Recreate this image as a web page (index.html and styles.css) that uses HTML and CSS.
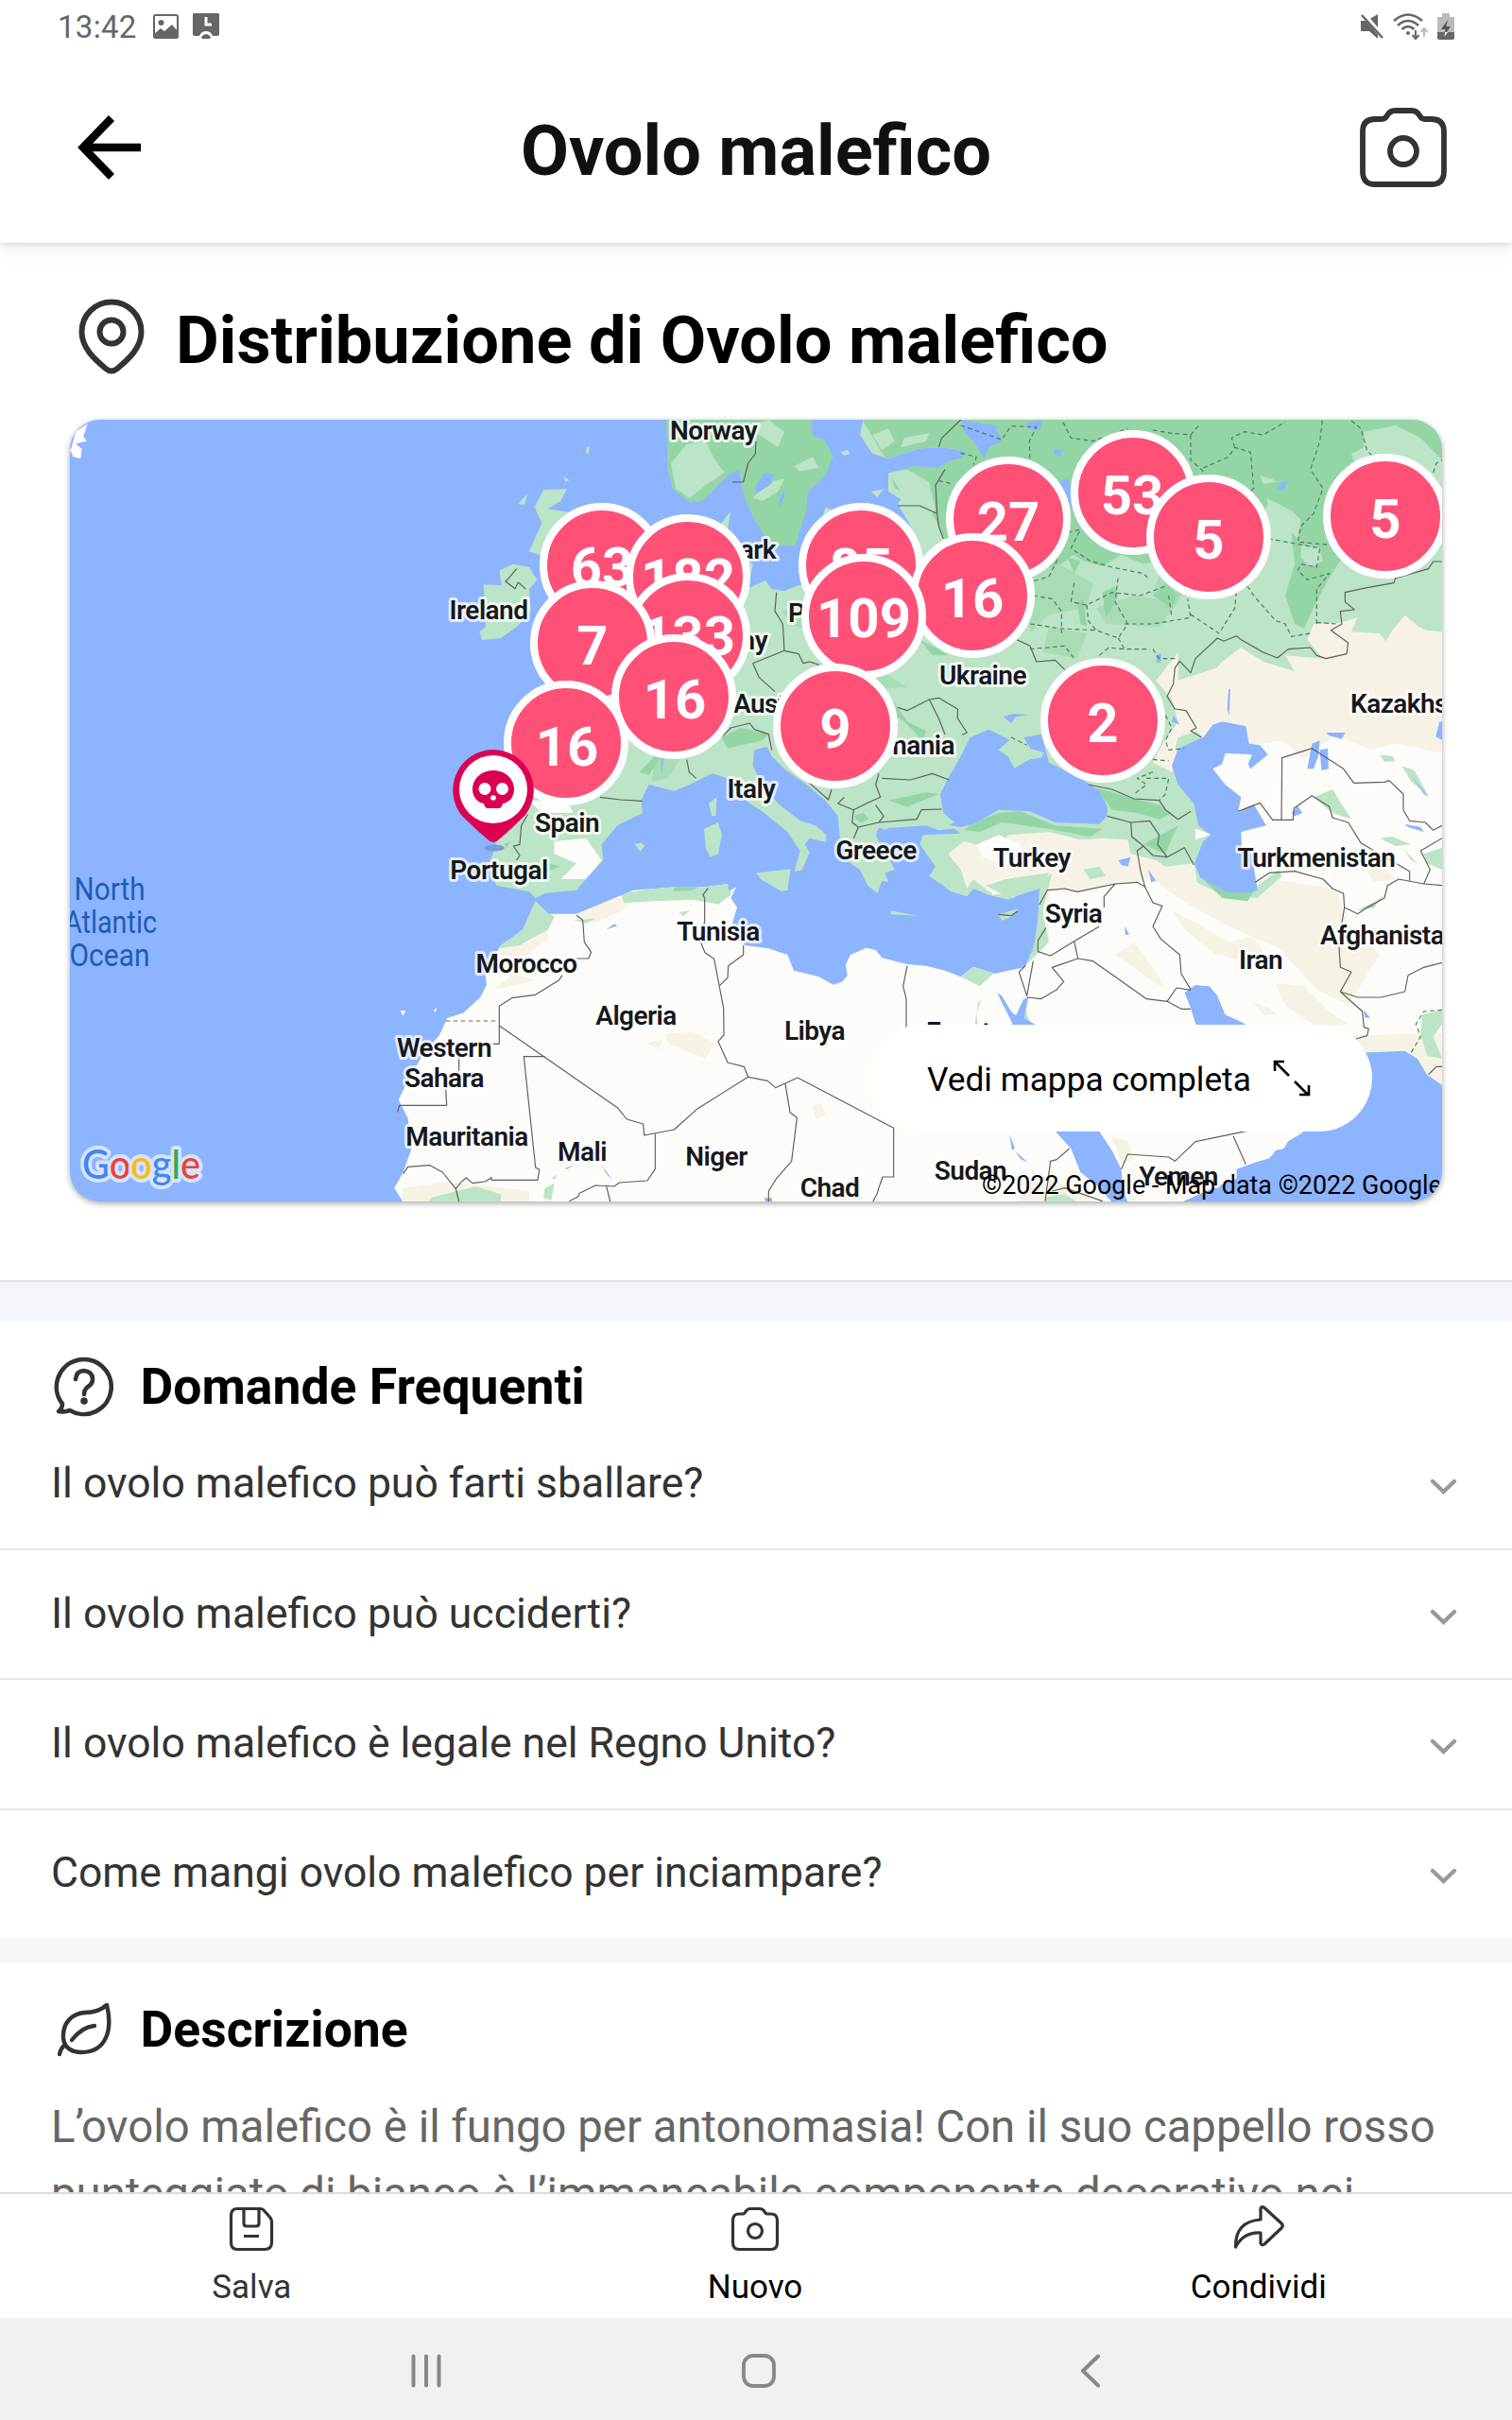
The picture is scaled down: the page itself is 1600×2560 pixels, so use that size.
FILE: index.html
```
<!DOCTYPE html>
<html lang="it">
<head>
  <meta charset="UTF-8">
  <meta name="viewport" content="width=device-width, initial-scale=1.0">
  <title>Ovolo malefico</title>
  <link rel="stylesheet" href="styles.css">
</head>
<body>
  <!-- status bar -->
  <div class="status-bar">
    <div class="status-left">
      <span class="clock">13:42</span>
      <svg class="status-photo" width="27" height="26" viewBox="0 0 27 26">
        <rect x="1" y="1" width="25" height="24" rx="1.5" fill="none" stroke="#666" stroke-width="2"/>
        <circle cx="8.500" cy="9" r="3" fill="#666"/>
        <path d="M1 21 L8 15 L12 18 L20 11 L26 18 V25 H1 Z" fill="#666"/>
      </svg>
      <svg class="status-app" width="30" height="28" viewBox="0 0 30 28">
        <path d="M2 0 H28 Q29 0 29 2 V22 Q29 24 26 24 L22 24 Q20 19 15 19 Q10 19 8 24 L4 24 Q1 24 1 22 V2 Q1 0 2 0 Z" fill="#666"/>
        <path d="M15 4 V12 H21" fill="none" stroke="#fff" stroke-width="3"/>
        <path d="M10 25 Q15 19 20 25 L19 27 H11 Z" fill="#666"/>
      </svg>
    </div>
    <div class="status-right">
      <svg width="26" height="28" viewBox="0 0 26 28">
        <path d="M1 8 H7 L19 1 V27 L10 19 H1 Z" fill="#666"/>
        <path d="M3 0 L26 27" stroke="#fff" stroke-width="5"/>
        <path d="M2 2 L24 26" stroke="#666" stroke-width="2.500"/>
      </svg>
      <svg width="38" height="28" viewBox="0 0 38 28">
        <g fill="none" stroke="#666" stroke-width="2.600">
          <path d="M1 8 Q16 -5 31 8"/>
          <path d="M5 13 Q16 3 27 13"/>
          <path d="M9.500 17 Q16 11 22.500 17"/>
          <path d="M24 18 V26 M20.500 23 L24 27 L27.500 23" stroke-width="2"/>
          <path d="M33 25 V17 M29.500 20 L33 16 L36.500 20" stroke="#bbb" stroke-width="2"/>
        </g>
        <circle cx="16" cy="21" r="2" fill="#666"/>
      </svg>
      <svg width="18" height="28" viewBox="0 0 18 28">
        <path d="M5 0 H13 V4 H18 V27 H0 V4 H5 Z" fill="#bbb"/>
        <path d="M0 20 H18 V26 Q18 28 16 28 H2 Q0 28 0 26 Z" fill="#666"/>
        <path d="M11 7 L4 17 H8.500 L7 24 L14 14 H9.500 Z" fill="#555"/>
        <path d="M8 20 H11 L7.500 25 Z" fill="#fff"/>
      </svg>
    </div>
  </div>

  <!-- header -->
  <header class="header">
    <svg class="back-arrow" width="68" height="68" viewBox="0 0 68 68" fill="none" stroke="#000" stroke-width="8.500">
      <path d="M67 34 H7 M36 3 L6 34 L36 65"/>
    </svg>
    <h1>Ovolo malefico</h1>
    <svg class="camera" width="92" height="84" viewBox="0 0 92 84" fill="none" stroke="#333" stroke-width="5.800">
      <path d="M16 12 H23 Q27 12 29 8 Q32 3 37 3 H55 Q60 3 63 8 Q65 12 69 12 H76 Q89 12 89 25 V67 Q89 81 76 81 H16 Q3 81 3 67 V25 Q3 12 16 12 Z"/>
      <circle cx="46" cy="46" r="14"/>
    </svg>
  </header>

  <main class="content">
    <!-- distribution map -->
    <section class="distribution">
      <div class="distribution-title">
        <svg width="70" height="80" viewBox="0 0 70 80" fill="none" stroke="#333" stroke-width="6">
          <path d="M35 3.500 C52 3.500 66.500 17 66.500 35 C66.500 52 53 64 41 74 Q35 79 29 74 C17 64 3.500 52 3.500 35 C3.500 17 18 3.500 35 3.500 Z"/>
          <circle cx="35" cy="35" r="12.500"/>
        </svg>
        <h2>Distribuzione di Ovolo malefico</h2>
      </div>

      <div class="map-card">
        <svg class="map" viewBox="42 42 4356 2481" preserveAspectRatio="none">
          <defs>
            <path id="eurasia" d="M1520 1560 L1500 1540 L1395 1520 L1378 1440 L1400 1370 L1475 1290 L1460 1240 L1700 1240 L1720 1100 L1650 930 L1600 900 L1760 850 L1900 800 L2000 700 L2100 650 L2110 370 L2140 332 L2128 400 L2190 480 L2210 500 L2205 530 L2190 580 L2250 552 L2270 580 L2310 585 L2355 568 L2450 560 L2600 480 L2720 400 L2700 360 L2670 310 L2680 295 L2640 270 L2640 212 L2720 190 L2800 195 L2830 175 L2870 165 L2890 145 L2820 130 L2740 133 L2640 165 L2590 150 L2550 90 L2560 42 L4400 42 L4400 2155 L4350 2120 L4320 2070 L4280 2045 L4160 2050 L3960 2060 L3755 1950 L3710 1930 L3685 1870 L3660 1840 L3615 1835 L3580 1860 L3600 1910 L3615 1960 L3700 2100 L3950 2200 L3955 2305 L3910 2330 L3895 2355 L3870 2360 L3850 2385 L3800 2400 L3745 2420 L3745 2450 L3670 2480 L3570 2525 L3400 2525 L3385 2480 L3380 2420 L3350 2360 L3310 2300 L3105 1960 L3070 1940 L3080 1875 L3050 1800 L3075 1780 L3105 1700 L3115 1630 L3120 1530 L3070 1545 L3020 1565 L2960 1550 L2910 1530 L2890 1555 L2840 1540 L2770 1490 L2790 1460 L2740 1390 L2750 1360 L2870 1355 L2850 1340 L2800 1345 L2815 1325 L2870 1335 L2910 1325 L2990 1280 L3090 1285 L3170 1320 L3310 1325 L3335 1300 L3335 1270 L3310 1220 L3250 1180 L3150 1130 L3125 1040 L3070 1050 L3090 1085 L3135 1098 L3125 1115 L3090 1120 L3040 1148 L3020 1110 L2990 1090 L3025 1058 L2960 1025 L2900 1050 L2870 1110 L2830 1180 L2805 1230 L2815 1290 L2850 1320 L2800 1345 L2760 1330 L2640 1338 L2600 1360 L2620 1400 L2640 1430 L2660 1470 L2630 1480 L2640 1510 L2620 1505 L2605 1545 L2575 1520 L2550 1470 L2520 1450 L2485 1360 L2480 1300 L2440 1250 L2380 1200 L2310 1150 L2270 1110 L2255 1080 L2215 1090 L2210 1140 L2240 1200 L2290 1260 L2360 1315 L2410 1330 L2443 1360 L2442 1382 L2390 1370 L2375 1390 L2390 1415 L2365 1472 L2342 1475 L2360 1410 L2320 1350 L2240 1285 L2200 1260 L2130 1180 L2080 1165 L2010 1200 L1960 1220 L1880 1200 L1855 1250 L1860 1290 L1780 1330 L1730 1390 L1735 1440 L1680 1500 L1650 1535 L1550 1545 Z"/>
            <path id="africa" d="M1520 1570 L1480 1660 L1440 1690 L1410 1710 L1360 1800 L1365 1835 L1345 1875 L1290 1925 L1240 1940 L1215 1995 L1160 2060 L1105 2160 L1085 2200 L1115 2260 L1125 2360 L1100 2430 L1072 2480 L1100 2525 L3350 2525 L3300 2470 L3250 2430 L3220 2355 L3170 2300 L3100 2100 L3035 1960 L2985 1860 L3000 1870 L3030 1920 L3055 1940 L3080 1875 L3075 1780 L3020 1790 L2980 1800 L2910 1778 L2870 1810 L2820 1790 L2760 1775 L2700 1770 L2620 1750 L2600 1725 L2570 1718 L2520 1740 L2505 1770 L2510 1805 L2495 1825 L2465 1835 L2420 1810 L2340 1790 L2320 1740 L2260 1720 L2185 1710 L2150 1660 L2145 1640 L2160 1590 L2140 1560 L2157 1525 L2132 1540 L2130 1515 L2060 1525 L1970 1525 L1830 1535 L1700 1590 L1650 1610 L1560 1610 Z"/>
            <clipPath id="landClip"><use href="#eurasia"/></clipPath>
            <clipPath id="africaClip"><use href="#africa"/></clipPath>
          </defs>

          <g class="sage">
            <use href="#eurasia"/>
            <!-- Ireland and Great Britain -->
            <path d="M1405 520 L1450 500 L1500 510 L1525 550 L1500 580 L1505 650 L1460 700 L1410 735 L1350 742 L1342 715 L1362 700 L1355 565 L1412 568 Z"/>
            <path d="M1545 265 L1620 262 L1600 300 L1560 325 L1625 335 L1640 380 L1680 480 L1760 560 L1780 640 L1740 720 L1560 700 L1600 620 L1545 560 L1555 480 L1500 460 L1540 370 L1517 320 Z"/>
            <path d="M1465 310 L1495 275 L1485 312 Z M1610 222 l18 12 l-14 6 Z M1682 130 l10 -4 l-4 26 l-8 -6 Z"/>
            <!-- Mediterranean islands -->
            <path d="M2055 1340 L2100 1320 L2112 1360 L2100 1420 L2075 1430 L2060 1400 Z M2070 1260 L2096 1240 L2092 1300 L2080 1300 Z M2220 1480 L2330 1468 L2320 1535 L2300 1538 L2235 1500 Z M2645 1600 L2740 1617 L2650 1612 Z M1835 1390 l20 -6 l12 12 l-14 16 Z M2990 1612 L3055 1594 L3030 1620 L3000 1632 Z"/>
          </g>
          <path class="forest" d="M1935 42 L1940 200 L1955 260 L2010 305 L2050 300 L2130 220 L2165 200 L2180 280 L2210 350 L2240 400 L2270 440 L2345 440 L2380 330 L2385 270 L2440 220 L2465 160 L2440 110 L2400 90 L2395 42 Z"/>

          <g clip-path="url(#landClip)">
            <path class="forest" d="M2550 30 H4398 V170 L4330 100 L4250 60 L4150 80 L4150 130 L4110 150 L4130 200 L4100 300 L4060 400 L4080 480 L4030 560 L3990 640 L3960 705 L3930 690 L3900 600 L3930 500 L3920 400 L3900 330 L3850 300 L3820 360 L3700 400 L3560 480 L3450 500 L3380 470 L3300 520 L3230 470 L3160 520 L3080 440 L3000 500 L2900 440 L2820 420 L2760 300 L2660 260 L2640 180 Z"/>
            <g class="mint">
              <path d="M3080 540 L3180 500 L3290 560 L3270 640 L3150 660 L3090 720 Z M3300 640 L3420 600 L3560 620 L3500 700 L3330 690 Z M3150 700 L3270 720 L3240 800 L3130 780 Z M3500 540 L3590 560 L3560 620 L3480 590 Z"/>
              <path d="M2300 650 L2400 620 L2500 700 L2460 720 L2350 700 Z M1900 1090 L1960 1060 L1990 1100 L1940 1180 L1890 1190 Z M2450 850 L2600 830 L2700 890 L2580 900 Z"/>
            </g>
            <g class="sage">
              <path d="M2640 210 L2700 200 L2770 240 L2790 330 L2740 360 L2700 300 Z M2590 90 L2640 70 L2660 110 L2620 140 Z M2690 100 L2770 85 L2760 110 L2680 130 Z"/>
              <path d="M3820 220 L3860 230 L3870 240 L3830 245 Z M3840 290 L3920 330 L3950 360 L3940 420 L3900 380 L3860 360 Z M3950 440 L4010 450 L4020 490 L3980 510 L3950 480 Z M3260 490 L3330 510 L3310 560 L3250 540 Z M3370 480 L3450 500 L3460 545 L3400 550 L3340 520 Z"/>
            </g>
            <g class="forest">
              <path d="M3480 600 L3520 560 L3560 600 L3540 640 Z M3320 590 L3360 570 L3370 600 L3345 650 L3330 670 Z M3240 620 L3260 610 L3270 700 L3250 690 Z M3210 480 L3250 490 L3230 530 Z"/>
              <path d="M2600 880 L2660 940 L2700 1000 L2760 1030 L2750 1060 L2690 1000 L2630 960 Z M2740 740 L2800 770 L2830 790 L2780 790 Z M2110 1050 L2170 1020 L2260 1040 L2240 1060 L2130 1085 Z M2640 1250 L2760 1225 L2800 1230 L2700 1270 Z M2420 740 L2450 700 L2440 660 Z"/>
              <path d="M2910 1320 L2990 1290 L3060 1285 L3170 1330 L3320 1340 L3280 1365 L3150 1340 L3000 1320 L2930 1350 L2880 1345 Z M3300 1210 L3400 1240 L3500 1265 L3540 1290 L3500 1310 L3430 1290 L3350 1280 Z M3450 1390 L3560 1330 L3540 1370 L3520 1420 Z"/>
              <path d="M1850 1160 L1890 1120 L1910 1080 L1918 1110 L1880 1170 Z M1500 1470 L1560 1450 L1600 1460 L1540 1480 Z M1420 1390 L1440 1380 L1430 1400 Z M2530 1300 L2560 1290 L2580 1310 L2550 1320 Z"/>
            </g>
            <!-- Kazakh steppe and Iberian plateau -->
            <path class="steppe" d="M4398 715 L4350 710 L4325 700 L4280 662 L4240 710 L4220 745 L4200 720 L4110 715 L4130 670 L4060 690 L3990 690 L3970 740 L4020 800 L3900 790 L3930 840 L3830 810 L3760 765 L3700 810 L3680 830 L3620 850 L3560 870 L3560 780 L3490 870 L3540 930 L3560 1000 L3510 1070 L3480 1130 L3540 1160 L3640 1060 L3700 1200 L3630 1500 L3610 1450 L3520 1460 L3490 1440 L3410 1420 L3400 1375 L3320 1370 L3250 1375 L3150 1350 L3020 1360 L2990 1410 L2880 1380 L2830 1420 L2870 1470 L2890 1530 L2910 1500 L2960 1540 L3040 1560 L3060 1510 L3100 1490 L3150 1500 L3130 1600 L3150 1700 L3100 1760 L3040 1800 L3070 1900 L3300 2525 L4398 2525 Z"/>
            <path class="sand" d="M4398 1100 L4250 1070 L4170 1090 L4060 1040 L3960 1120 L3890 1060 L3700 1090 L3650 1200 L3760 1500 L3860 1500 L4060 1530 L4100 1640 L4200 1740 L4100 1900 L4000 1850 L3880 1720 L3700 1640 L3560 1560 L3480 1500 L3350 1520 L3240 1540 L3150 1540 L3150 1700 L3090 1760 L3040 1800 L3070 1900 L3300 2525 L4000 2525 L3860 2000 L4398 1990 Z"/>
            <path class="sand" d="M1580 1380 L1680 1370 L1730 1440 L1680 1500 L1600 1500 L1650 1450 L1580 1420 Z M1500 1250 L1620 1250 L1640 1290 L1540 1290 Z M2920 1390 L2990 1360 L3060 1390 L3080 1430 L3000 1450 L2940 1430 Z M2960 1510 L3040 1490 L3020 1540 L2970 1550 Z"/>
            <g class="steppe">
              <path d="M3540 1600 L3620 1640 L3720 1700 L3800 1680 L3860 1780 L3780 1760 L3680 1740 L3580 1660 Z M3870 1830 L3960 1840 L4040 1920 L4100 1960 L4000 1970 L3900 1900 Z M3800 1890 L3850 1910 L3870 1930 L3830 1930 Z M3940 1720 L3980 1640 L4010 1660 L3970 1740 Z M4120 1400 L4200 1440 L4250 1500 L4180 1510 Z M3360 1740 L3420 1700 L3480 1780 L3520 1850 L3460 1810 Z M3350 2320 L3400 2330 L3420 2390 L3380 2400 Z"/>
            </g>
            <!-- woods round Caspian and Levant shores -->
            <path class="sage" d="M3610 1440 L3650 1500 L3710 1530 L3800 1530 L3880 1470 L3890 1490 L3810 1560 L3700 1550 L3620 1510 Z M3105 1530 L3160 1480 L3130 1600 L3110 1700 L3080 1760 L3085 1720 Z M3550 1085 L3560 1050 L3620 1030 L3640 1060 Z"/>
            <path class="sage" d="M2950 1520 L3010 1500 L3080 1490 L3150 1480 L3130 1530 L3020 1560 Z M3260 1470 L3310 1460 L3330 1490 L3280 1500 Z M4200 1370 L4240 1365 L4300 1390 L4250 1395 Z M4340 1420 L4398 1400 V1470 L4350 1450 Z M4335 1930 L4398 1915 V1960 L4370 2000 L4398 2070 L4350 2060 L4330 1990 Z M4270 1400 L4320 1450 L4300 1440 Z M4200 1105 L4240 1110 L4250 1125 L4215 1128 Z M4270 1140 L4310 1155 L4355 1235 L4300 1190 Z M3990 1240 L4050 1215 L4110 1310 L4050 1290 Z"/>
            <path class="forest" d="M3630 1490 L3700 1535 L3780 1545 L3810 1525 L3780 1570 L3700 1560 Z M4130 1600 L4190 1570 L4215 1550 L4180 1590 Z"/>
            <!-- inland water -->
            <g class="sea">
              <path d="M3560 1085 L3640 1050 L3670 1010 L3700 1000 L3775 1015 L3785 1070 L3820 1075 L3845 1105 L3790 1150 L3782 1135 L3795 1105 L3710 1100 L3700 1135 L3670 1150 L3710 1200 L3760 1240 L3750 1290 L3800 1262 L3840 1330 L3760 1350 L3762 1400 L3800 1400 L3800 1460 L3812 1535 L3780 1545 L3710 1540 L3630 1495 L3612 1450 L3640 1380 L3662 1360 L3625 1330 L3610 1260 L3560 1200 L3540 1140 Z"/>
              <path d="M2870 42 L2980 60 L3000 110 L2960 130 L2945 165 L2910 110 L2880 80 Z M3080 50 L3130 42 L3120 75 L3080 70 Z M3165 135 l28 4 l-6 20 l-20 -8 Z M3890 240 l20 -6 l-16 34 l-20 -8 Z M3185 235 L3215 230 L3225 330 L3200 280 Z"/>
              <path d="M3970 1150 L3985 1070 L4010 1060 L4005 1110 L3990 1150 Z M4010 1090 L4035 1085 L4038 1150 L4015 1155 Z M4030 1035 L4090 1035 L4080 1055 L4040 1045 Z M3920 1290 L3940 1268 L3955 1290 L3930 1300 Z M4390 1000 h10 v60 l-22 -12 Z M4300 1170 L4355 1240 L4340 1230 Z"/>
              <path d="M3370 1440 L3410 1430 L3400 1460 L3380 1455 Z M3465 1470 L3490 1505 L3475 1510 Z M3390 1650 L3405 1675 L3393 1678 Z M4150 1915 l20 26 l-18 -2 Z M4280 1325 L4330 1335 L4340 1350 L4290 1335 Z M3005 985 L3040 975 L3085 978 L3045 985 L3030 1005 Z M3490 790 l16 -6 v26 l-12 4 Z M3545 980 L3565 1010 L3540 1000 Z M1918 1110 L1926 1110 L1920 1180 Z M3720 900 L3726 895 L3722 980 L3716 960 Z M2635 1345 l-35 12 l10 -20 Z"/>
            </g>
            <path class="sand" d="M3615 1375 L3665 1358 L3615 1340 Z"/>
          </g>

          <!-- lakes and clearings of Scandinavia -->
          <path class="sage" d="M1950 180 L2000 120 L2060 110 L2090 170 L2120 210 L2060 250 L2010 290 L1965 260 Z M2200 60 L2260 42 L2310 80 L2290 130 L2230 90 Z M2210 290 L2260 240 L2310 230 L2290 270 L2240 300 Z M2340 190 L2400 160 L2420 195 L2360 205 Z M1980 150 L1995 170 L1990 230 L1985 180 Z"/>
          <path class="sea" d="M2215 260 L2245 210 L2275 215 L2270 245 L2225 275 Z M2295 290 L2310 265 L2310 290 L2290 320 Z M2145 205 L2165 220 L2175 240 L2150 245 Z"/>
          <path class="sage" d="M2585 270 l40 -8 l-20 26 Z M2490 145 l22 -8 l6 14 l-20 6 Z M2440 320 l20 6 l-30 30 Z"/>

          <use href="#africa" class="sand"/>
          <g clip-path="url(#africaClip)">
            <path class="steppe" d="M1400 1720 L1500 1700 L1560 1640 L1560 1690 L1480 1750 L1400 1740 Z M1650 1610 L1740 1560 L1830 1560 L1800 1600 L1700 1640 Z M1930 1990 L2020 1985 L2090 2020 L2060 2070 L2010 2050 L1940 2020 Z M1870 2020 L1925 2010 L1910 2040 Z M2400 2220 L2430 2210 L2440 2250 L2410 2260 Z M1390 1850 L1450 1800 L1520 1820 L1440 1840 Z M1100 2480 L1250 2460 L1500 2490 L1500 2525 H1090 Z M3100 2440 L3200 2470 L3300 2525 H3050 Z"/>
            <path class="sage" d="M1520 1570 L1580 1620 L1560 1660 L1470 1710 L1400 1720 L1400 1690 L1480 1650 Z M1790 1545 L1970 1520 L2070 1520 L2140 1510 L2140 1550 L2100 1580 L2020 1565 L1900 1570 L1800 1575 Z M2870 1810 L2910 1778 L2980 1795 L2930 1840 Z M1190 2510 L1330 2475 L1410 2500 V2525 H1180 Z M1550 2480 L1580 2465 L1570 2520 L1545 2510 Z M1975 1605 L2010 1600 L1990 1618 Z M3140 2510 L3200 2500 L3240 2525 H3140 Z M1640 1630 L1710 1625 L1680 1640 Z M2925 1890 L2935 1885 L2920 1925 L2925 1970 L2915 1960 Z"/>
            <path class="forest" d="M1960 1525 L2040 1522 L2020 1535 L1960 1538 Z"/>
            <path class="sea" d="M1745 1660 L1770 1642 L1780 1648 Z M1613 2418 L1645 2406 L1620 2420 Z M1730 2408 L1765 2455 L1745 2435 Z M1573 2452 L1588 2436 L1580 2450 Z M3025 2310 L3042 2355 L3032 2360 Z M3042 2362 L3083 2400 L3060 2388 Z M2245 2512 h26 v12 h-20 Z"/>
          </g>
          <path class="sea" d="M3070 1880 L3085 1875 L3070 1945 L3105 1965 H3030 Z"/>
          <path class="forest" d="M3090 1740 L3105 1700 L3100 1730 L3085 1740 Z"/>
          <path class="snow" d="M42 150 L60 80 L98 55 L85 95 L95 110 L60 118 L80 135 L76 165 L52 160 L42 130 Z M1090 1918 l18 0 l-8 16 Z M1195 1918 l12 -10 l-4 14 Z"/>

          <!-- country borders -->
          <g class="border">
            <path d="M1650 1615 L1670 1630 L1675 1700 L1697 1732 L1688 1752 L1650 1752 M1605 1805 L1595 1820 L1520 1867 L1445 1877 L1405 1903 V2023 H1385 M1405 1965 L1780 2225 L1810 2262 L1862 2277 L1865 2313 L1960 2295 L2035 2228 L2195 2128 L2182 2095 L2130 2082 L2100 2015 L2118 1995 L2117 1910 L2087 1753 L2058 1733 L2040 1690 L2057 1635 V1560 L2052 1550 L2068 1528"/>
            <path d="M2180 1710 V1740 L2132 1775 L2130 1813 L2105 1837 M2195 2128 L2257 2140 L2282 2162 L2352 2130 L2657 2290 V2445 H2622 L2610 2480 L2604 2500 L2590 2525 M2313 2150 L2328 2240 L2350 2257 L2333 2395 L2285 2450 L2260 2490 V2525 M2700 1775 L2693 1810 L2687 1840 L2697 1880 V1970"/>
            <path d="M1550 2063 H1483 L1520 2415 L1532 2422 L1527 2455 H1380 V2447 L1360 2460 L1320 2465 L1300 2448 L1285 2460 L1267 2483 L1225 2430 L1185 2408 L1115 2413 L1100 2435 M1267 2483 L1277 2523 M1900 2308 V2420 L1875 2457 L1787 2463 L1770 2475 L1710 2472 L1660 2497 L1655 2508 L1627 2522 M1745 2475 L1758 2525 M1277 2060 V2110 M1235 2160 L1238 2218 H1088 L1082 2240"/>
            <path d="M1495 1295 L1475 1330 L1470 1390 L1450 1395 L1470 1425 L1460 1440 M1725 1240 L1790 1248 L1858 1252 M2220 110 L2218 150 L2195 180 L2180 240 L2145 240 M2285 590 L2280 650 L2305 690 L2310 775 L2210 815 L2230 860 L2280 905 M2310 775 L2355 785 L2370 815 L2390 810 L2420 820 M2115 1045 L2140 1020 L2200 1005 L2215 1025 L2260 1040 L2270 1090 M2000 1120 L2008 1160 L2030 1180"/>
            <path d="M2670 955 L2700 965 L2770 930 L2800 925 L2860 960 L2860 990 L2890 1035 L2875 1042 M2770 930 L2800 990 L2820 1040 M2620 1180 L2710 1185 L2780 1165 L2833 1185 M2390 1195 L2450 1248 L2460 1215 M2610 1165 L2600 1200 L2615 1240 L2570 1260 L2530 1280 L2480 1260 L2500 1240 M2530 1280 L2525 1320 L2545 1335 L2610 1320 L2625 1300 L2600 1265 M2610 1320 L2730 1310 L2745 1280 L2810 1278 M2545 1335 L2530 1370"/>
            <path d="M2870 42 L2810 100 L2800 130 M2820 200 L2790 250 L2795 340 L2740 315 L2670 315 M2795 340 L2800 380 L2815 420 M1460 515 L1435 545 L1425 555 L1455 578 L1465 558 L1490 580"/>
            <path d="M3048 740 L3090 760 L3110 810 L3170 805 L3200 835 M3635 1050 L3600 1030 L3618 1020 L3585 965 L3550 960 L3525 920 L3545 880 L3550 830 L3565 808 L3600 845 L3615 800 L3685 735 L3705 745 L3745 728 L3760 740 L3830 780 L3875 798 L3910 770 L3980 765 L4000 790 L4030 800 L4095 785 L4100 750 L4045 710 L4080 690 L4075 650 L4120 645 L4090 620 L4090 590 L4160 575 L4245 560 L4250 545 L4355 515 L4370 492 H4398"/>
            <path d="M3888 1310 L3890 1115 L3985 1085 L4085 1150 L4118 1195 L4215 1192 L4230 1187 L4275 1230 V1280 L4295 1315 L4345 1320 L4370 1345 L4398 1330 M3750 1285 L3820 1258 L3860 1312 H3925 L3928 1275 L3985 1235 L4040 1270 L4050 1305 L4100 1320 L4140 1385 L4295 1475 V1505 M3805 1510 L3850 1480 L3930 1475 L4020 1500 L4050 1530 L4085 1545 L4088 1590 L4070 1700 L4075 1780 L4110 1795 L4075 1857 L4145 1920 L4150 1970 L4165 1975 L4160 1997 L4125 2007"/>
            <path d="M4088 1590 L4130 1610 L4160 1590 L4215 1560 L4225 1520 L4260 1500 L4340 1515 L4360 1470 L4330 1410 L4398 1370 M4340 1515 L4398 1520 M4075 1857 L4130 1875 H4205 L4280 1857 L4290 1805 L4340 1780 L4398 1765 M4355 2120 L4380 2095 H4398"/>
            <path d="M3120 1580 L3145 1535 L3200 1530 L3240 1540 L3360 1515 L3430 1510 L3455 1525 M3335 1300 L3410 1320 L3413 1365 L3450 1395 L3430 1410 L3440 1470 L3455 1525 L3480 1575 L3510 1585 L3480 1650 L3505 1690 L3565 1740 L3570 1800 L3600 1850 M3360 1515 L3325 1555 V1590 M3310 1650 L3230 1697 L3155 1743 L3115 1730 V1695 L3140 1655 M3230 1697 L3242 1752 L3160 1780 L3197 1825 L3175 1850 L3125 1880 L3080 1875 M3242 1752 L3290 1760 L3460 1880 L3525 1888 L3555 1845 L3600 1852 M3525 1888 L3570 1912 H3600 M3100 1760 L3080 1870 L3055 1795 L3075 1775"/>
            <path d="M3275 1200 L3350 1215 L3420 1245 L3500 1250 L3520 1280 L3560 1310 L3600 1285 M3410 1320 L3470 1315 L3500 1360 L3495 1390 L3525 1430 L3580 1400 L3610 1455 M3450 1395 L3480 1425 L3525 1430 M3380 2420 L3400 2373 L3530 2382 L3550 2395 L3615 2333 L3775 2300 M3735 2315 L3775 2405 M3215 2355 L3175 2390 L3155 2395 L3138 2522 M3160 2490 L3200 2480 L3320 2522 M2990 1612 L3030 1616 L3050 1602"/>
          </g>

          <!-- regional borders -->
          <g class="border dashed">
            <path d="M1235 1950 H1405 M2870 60 L3000 105 L3030 62 L3110 65 L3088 110 L3090 180 M3195 50 L3220 100 L3290 110 L3400 70 M3480 75 L3540 85 L3600 90 L3630 55 M3600 90 L3600 170 L3650 215 M3640 195 L3720 160 L3740 130 L3790 145 L3800 260 L3780 280 M3740 130 L3730 100 L3770 80 L3830 90 L3900 50 M4018 45 L4010 110 L3980 200 L4020 260 L3990 340 L3950 380 L3940 430 L4050 440"/>
            <path d="M4110 45 L4140 70 L4160 140 L4190 170 M4370 210 L4380 180 L4398 170 M3210 400 L3250 390 L3220 450 L3280 490 L3350 510 L3450 530 L3470 550 M3080 560 L3150 540 L3180 480 M3100 600 L3160 610 L3190 650 L3190 720 M3230 560 L3220 620 L3270 630 L3350 590 L3440 600 L3520 570 M3270 630 L3275 680 L3300 710 L3370 735 L3400 690 L3360 620 L3370 540"/>
            <path d="M3090 690 L3190 705 L3300 710 M3390 690 L3480 690 L3600 670 L3590 610 M3530 600 L3540 670 M3090 770 L3200 760 L3230 800 M3370 735 L3390 770 L3470 770 M3600 660 L3690 720 L3740 640 L3745 590 M3780 570 L3800 600 L3870 680 L3900 690 L3920 730 L3980 720 M4000 690 L4000 580 L4040 530 L3970 550 L3940 520 L3950 500 L4000 510 L4010 450 L3850 420 M4000 685 L4060 690"/>
            <path d="M3310 790 L3340 765 L3390 770 M3480 770 L3500 800 L3550 800 M3520 980 L3540 1020 L3520 1060 L3530 1090 L3580 1085 M3480 1120 L3530 1125 M3480 1160 L3430 1180 L3460 1200 L3420 1230 M3460 1180 L3530 1180 L3520 1230 L3500 1250 M3030 1050 L3080 1075 M4300 2050 L4330 2000 L4315 1960 L4340 1920 L4398 1915 M2870 148 L2920 160 L2910 185 M2800 235 L2840 245"/>
          </g>
        </svg>

        <!-- place names, clusters and the sighting pin -->
        <svg class="map-overlay" viewBox="74 444 1452 827">
          <g class="place">
            <text x="755" y="465">Norway</text>
            <text x="821" y="591" text-anchor="end">Denmark</text>
            <text x="517" y="655">Ireland</text>
            <text x="834" y="658" text-anchor="start">Poland</text>
            <text x="812" y="687" text-anchor="end">Germany</text>
            <text x="776" y="754" text-anchor="start">Austria</text>
            <text x="1010" y="798" text-anchor="end">Romania</text>
            <text x="1040" y="724">Ukraine</text>
            <text x="1429" y="754" text-anchor="start">Kazakhstan</text>
            <text x="795" y="844">Italy</text>
            <text x="600" y="880">Spain</text>
            <text x="528" y="930">Portugal</text>
            <text x="557" y="1029">Morocco</text>
            <text x="673" y="1084">Algeria</text>
            <text x="760" y="995">Tunisia</text>
            <text x="862" y="1100">Libya</text>
            <text x="927" y="909">Greece</text>
            <text x="1092" y="917">Turkey</text>
            <text x="1136" y="976">Syria</text>
            <text x="1393" y="917">Turkmenistan</text>
            <text x="1334" y="1025">Iran</text>
            <text x="1397" y="999" text-anchor="start">Afghanistan</text>
            <text x="980" y="1101" text-anchor="start">Egypt</text>
            <text x="470" y="1118">Western</text>
            <text x="470" y="1150">Sahara</text>
            <text x="494" y="1212">Mauritania</text>
            <text x="616" y="1228">Mali</text>
            <text x="758" y="1233">Niger</text>
            <text x="878" y="1266">Chad</text>
            <text x="1027" y="1248">Sudan</text>
            <text x="1247" y="1254">Yemen</text>
          </g>
          <g class="ocean">
            <text x="116" y="952" textLength="75" lengthAdjust="spacingAndGlyphs">North</text>
            <text x="117" y="987" textLength="98" lengthAdjust="spacingAndGlyphs">Atlantic</text>
            <text x="116" y="1022" textLength="85" lengthAdjust="spacingAndGlyphs">Ocean</text>
          </g>
          <text class="google" x="87" y="1247" textLength="125" lengthAdjust="spacingAndGlyphs"><tspan fill="#4285f4">G</tspan><tspan fill="#ea4335">o</tspan><tspan fill="#fbbc05">o</tspan><tspan fill="#4285f4">g</tspan><tspan fill="#34a853">l</tspan><tspan fill="#ea4335">e</tspan></text>

          <g class="cluster">
            <circle cx="637" cy="598" r="62"/><text x="637" y="620">63</text>
            <circle cx="728" cy="610" r="62"/><text x="728" y="632">182</text>
            <circle cx="728" cy="672" r="62"/><text x="728" y="693">133</text>
            <circle cx="627" cy="680" r="62"/><text x="627" y="703">7</text>
            <circle cx="713" cy="737" r="62"/><text x="714" y="760">16</text>
            <circle cx="599" cy="786" r="62"/><text x="600" y="810">16</text>
            <circle cx="911" cy="598" r="62"/><text x="911" y="621">85</text>
            <circle cx="1067" cy="549" r="62"/><text x="1067" y="572">27</text>
            <circle cx="1029" cy="630" r="62"/><text x="1029" y="653">16</text>
            <circle cx="914" cy="652" r="62"/><text x="914" y="674">109</text>
            <circle cx="884" cy="768" r="62"/><text x="884" y="791">9</text>
            <circle cx="1199" cy="521" r="62"/><text x="1198" y="544">53</text>
            <circle cx="1279" cy="568" r="62"/><text x="1279" y="591">5</text>
            <circle cx="1466" cy="546" r="62"/><text x="1466" y="569">5</text>
            <circle cx="1167" cy="762" r="62"/><text x="1167" y="785">2</text>
          </g>

          <ellipse cx="523" cy="897" rx="11" ry="3.500" fill="#7a9ad8"/>
          <path class="pin" d="M522 793 a43 43 0 0 1 34 69 Q540 878 528 888 Q522 894 516 888 Q504 878 488 862 a43 43 0 0 1 34 -69 Z"/>
          <circle cx="522" cy="835" r="36" fill="#fff"/>
          <path fill="#db0052" d="M522 815 C535 815 544 824 544 835 C544 843 539 849 532 850 L531 853 Q530 855 528 855 H516 Q514 855 513 853 L512 850 C505 849 500 843 500 835 C500 824 509 815 522 815 Z"/>
          <circle cx="513" cy="834.500" r="6.500" fill="#fff"/>
          <circle cx="531.500" cy="834.500" r="6.500" fill="#fff"/>
          <circle cx="522" cy="844" r="2.800" fill="#fff"/>
        </svg>

        <div class="attribution">©2022 Google - Map data ©2022 Google</div>
        <button class="map-button">
          Vedi mappa completa
          <svg width="40" height="40" viewBox="0 0 40 40" fill="none" stroke="#000" stroke-width="2.600">
            <path d="M2 13 V3 H12 M2.500 3.500 L17 18 M23 24 L37.500 38.500 M38 28 V38 H28"/>
          </svg>
        </button>
      </div>
    </section>

    <!-- FAQ -->
    <section class="faq">
      <div class="section-title">
        <svg width="64" height="64" viewBox="0 0 64 64" fill="none" stroke="#333" stroke-width="4.600" stroke-linecap="round" stroke-linejoin="round">
          <path d="M10 50 A29 29 0 1 1 18 57 Q12 59 6 58 Q10 55 10 50 Z"/>
          <path d="M24 24 Q25 15 33 15 Q42 16 42 24 Q42 29 37 32 Q33 35 33 40"/>
          <circle cx="33" cy="47" r="1.500" fill="#333"/>
        </svg>
        <h3>Domande Frequenti</h3>
      </div>
      <div class="question">
        <span>Il ovolo malefico può farti sballare?</span>
        <svg class="chevron" width="30" height="18" viewBox="0 0 30 18"><path d="M4 3 L15.500 14 L27 3"/></svg>
      </div>
      <div class="question">
        <span>Il ovolo malefico può ucciderti?</span>
        <svg class="chevron" width="30" height="18" viewBox="0 0 30 18"><path d="M4 3 L15.500 14 L27 3"/></svg>
      </div>
      <div class="question">
        <span>Il ovolo malefico è legale nel Regno Unito?</span>
        <svg class="chevron" width="30" height="18" viewBox="0 0 30 18"><path d="M4 3 L15.500 14 L27 3"/></svg>
      </div>
      <div class="question">
        <span>Come mangi ovolo malefico per inciampare?</span>
        <svg class="chevron" width="30" height="18" viewBox="0 0 30 18"><path d="M4 3 L15.500 14 L27 3"/></svg>
      </div>
    </section>

    <!-- description -->
    <section class="description">
      <div class="section-title">
        <svg width="64" height="60" viewBox="0 0 64 60" fill="none" stroke="#333" stroke-width="4.400" stroke-linecap="round" stroke-linejoin="round">
          <path d="M57 4 C63 28 58 54 30 54 C21 54 12 50 11 39 C10 24 19 13 34 12 Q48 12 57 4 Z"/>
          <path d="M20 41 Q31 27 44 26 M13 46 Q8 50 7 56"/>
        </svg>
        <h3>Descrizione</h3>
      </div>
      <p>L’ovolo malefico è il fungo per antonomasia! Con il suo cappello rosso punteggiato di bianco è l’immancabile componente decorativo nei</p>
    </section>
  </main>

  <!-- tab bar -->
  <nav class="tabs">
    <div class="tab save">
      <svg width="52" height="52" viewBox="0 0 52 52" fill="none" stroke="#333" stroke-width="3.200">
        <path d="M11 4.500 H36 Q38 4.500 40 7 L46 14 Q47.500 16 47.500 18 V40 Q47.500 47.500 40 47.500 H11 Q4.500 47.500 4.500 40 V12 Q4.500 4.500 11 4.500 Z"/>
        <path d="M18 5 V20 Q18 23 21 23 H31 Q34 23 34 20 V5 M18 33.500 H34"/>
      </svg>
      <span>Salva</span>
    </div>
    <div class="tab">
      <svg width="52" height="52" viewBox="0 0 52 52" fill="none" stroke="#333" stroke-width="3.200">
        <path d="M9 10 H13 Q15 10 16 7.500 Q18 4.500 21 4.500 H31 Q34 4.500 36 7.500 Q37 10 39 10 H43 Q49.500 10 49.500 17 V40 Q49.500 47.500 43 47.500 H9 Q2.500 47.500 2.500 40 V17 Q2.500 10 9 10 Z"/>
        <circle cx="26" cy="28" r="7.500"/>
      </svg>
      <span>Nuovo</span>
    </div>
    <div class="tab">
      <svg width="56" height="52" viewBox="0 0 56 52" fill="none" stroke="#333" stroke-width="3.200" stroke-linejoin="round">
        <path d="M30 16 V4 Q31 1.500 34 3.500 L52 20 Q54.500 22.500 52 25 L34 42 Q31 44 30 41 V30 Q12 29 3.500 45 Q3 18 30 16 Z"/>
      </svg>
      <span>Condividi</span>
    </div>
  </nav>

  <!-- system navigation -->
  <div class="system-nav">
    <svg width="34" height="36" viewBox="0 0 34 36" stroke="#888" stroke-width="4" stroke-linecap="round"><path d="M3.500 2.500 V33.500 M17 2.500 V33.500 M30.500 2.500 V33.500"/></svg>
    <svg width="36" height="36" viewBox="0 0 36 36" fill="none" stroke="#888" stroke-width="3.800"><rect x="2" y="2" width="32" height="32" rx="10"/></svg>
    <svg class="nav-back" width="22" height="36" viewBox="0 0 22 36" fill="none" stroke="#888" stroke-width="4" stroke-linecap="round" stroke-linejoin="round"><path d="M19 2.500 L3 18 L19 33.500"/></svg>
  </div>
</body>
</html>
```
FILE: styles.css
```
* {
  box-sizing: border-box;
}

body {
  margin: 0;
  width: 1600px;
  height: 2560px;
  display: flex;
  flex-direction: column;
  overflow: hidden;
  background-color: #fff;
  font-family: Roboto, "Liberation Sans", sans-serif;
  color: #000;
}

h1, h2, h3, p {
  margin: 0;
}

svg {
  display: block;
  flex-shrink: 0;
}

/* status bar */
.status-bar {
  position: relative;
  z-index: 2;
  display: flex;
  justify-content: space-between;
  align-items: center;
  height: 55px;
  padding: 0 61px 0 61px;
  background-color: #fff;
}

.status-left {
  display: flex;
  align-items: center;
}

.clock {
  font-size: 33px;
  line-height: 40px;
  letter-spacing: 0.3px;
  color: #666;
  margin-top: 2px;
}

.status-photo {
  margin-left: 17px;
}

.status-app {
  margin-left: 14px;
}

.status-right {
  display: flex;
  align-items: center;
  gap: 9px;
}

/* header */
.header {
  position: relative;
  z-index: 1;
  display: grid;
  grid-template-columns: 92px 1fr 92px;
  align-items: center;
  height: 202px;
  padding: 0 70px;
  background-color: #fff;
  box-shadow: 0 2px 5px rgba(0, 0, 0, 0.12), 0 8px 22px rgba(0, 0, 0, 0.06);
}

.header h1 {
  font-size: 74px;
  line-height: 90px;
  font-weight: 700;
  color: #111;
  text-align: center;
  padding-top: 7px;
}

.back-arrow {
  margin-left: 12px;
}

.camera {
  margin-left: 1px;
  margin-top: -1px;
}

.content {
  flex: 1;
  min-height: 0;
  overflow: hidden;
}

/* distribution map */
.distribution {
  height: 1097px;
  padding: 50px 74px 0;
}

.distribution-title {
  display: flex;
  align-items: center;
  gap: 33px;
  height: 106px;
  padding-left: 9px;
  margin-bottom: 31px;
}

.distribution-title svg {
  margin-top: -8px;
}

.distribution-title h2 {
  font-size: 70.4px;
  line-height: 90px;
  font-weight: 700;
}

.map-card {
  position: relative;
  height: 827px;
  border-radius: 32px;
  overflow: hidden;
  background-color: #8cb4ff;
  box-shadow: 0 2px 6px rgba(0, 0, 0, 0.35);
}

.map,
.map-overlay {
  position: absolute;
  top: 0;
  left: 0;
  width: 1452px;
  height: 827px;
}

.sage { fill: #bce4c6; }
.mint { fill: #a8dcb5; }
.forest { fill: #94d5a6; }
.steppe { fill: #f6f2e6; }
.sand { fill: #fefcf8; }
.snow { fill: #fff; }
.sea { fill: #8cb4ff; }

.border {
  fill: none;
  stroke: #5c605e;
  stroke-width: 3.5;
  stroke-linejoin: round;
}

.dashed {
  stroke: #4f7a61;
  stroke-dasharray: 14 10;
}

.place {
  font-size: 28px;
  font-weight: 600;
  letter-spacing: -0.55px;
  text-anchor: middle;
  fill: #16181c;
  stroke: rgba(255, 255, 255, 0.75);
  stroke-width: 6px;
  stroke-linejoin: round;
  paint-order: stroke;
}

.ocean {
  font-size: 33px;
  text-anchor: middle;
  fill: #1d5cb8;
}

.google {
  font-family: Lato, "Open Sans", sans-serif;
  font-size: 43px;
  font-weight: 500;
  stroke: #d5e4ff;
  stroke-width: 8px;
  stroke-linejoin: round;
  paint-order: stroke;
}

.cluster circle {
  fill: #ff5178;
  stroke: #fff;
  stroke-width: 8px;
}

.cluster text {
  font-size: 58px;
  font-weight: 700;
  text-anchor: middle;
  fill: #fff;
}

.pin {
  fill: #db0052;
}

.attribution {
  position: absolute;
  right: 3px;
  bottom: 1px;
  width: 484px;
  overflow: hidden;
  white-space: nowrap;
  font-size: 26.9px;
  line-height: 32px;
}

.map-button {
  position: absolute;
  right: 74px;
  bottom: 74px;
  display: flex;
  justify-content: space-between;
  align-items: center;
  width: 532px;
  height: 113px;
  padding: 2px 65px 0 61px;
  border: none;
  border-radius: 57px;
  background-color: #fff;
  font-family: inherit;
  font-size: 35.3px;
  color: #000;
  white-space: nowrap;
}

.map-button svg {
  margin-top: -3px;
}

/* sections */
.section-title {
  display: flex;
  align-items: center;
  gap: 28.5px;
}

.section-title h3 {
  font-size: 53.5px;
  line-height: 64px;
  font-weight: 700;
}

.faq {
  height: 696px;
  border-top: 2px solid #dfe2e7;
}

.faq::before {
  content: "";
  display: block;
  height: 41px;
  background-color: #f2f5f9;
}

.faq .section-title {
  height: 105.7px;
  padding: 34px 56px 0;
}

.question {
  display: flex;
  justify-content: space-between;
  align-items: center;
  height: 137.33px;
  padding: 0 58px 2px 54px;
  border-bottom: 2px solid #e5e6e8;
  font-size: 44.5px;
  color: #333;
}

.question:last-child {
  height: 135.3px;
  border-bottom: none;
}

.chevron {
  fill: none;
  stroke: #999;
  stroke-width: 4.4;
  stroke-linecap: round;
  margin-top: 8px;
}

.description {
  border-top: 27px solid #f4f7fa;
}

.description .section-title {
  height: 138px;
  padding: 2px 56px 0;
}

.description p {
  padding: 0 50px 0 54px;
  font-size: 47.3px;
  line-height: 71.3px;
  color: #666;
}

/* tab bar */
.tabs {
  display: flex;
  height: 133px;
  padding-right: 2px;
  border-top: 2px solid #dadbdd;
  background-color: #fff;
}

.tab {
  flex: 1;
  display: flex;
  flex-direction: column;
  align-items: center;
  gap: 16px;
  padding-top: 11px;
  font-size: 35px;
  line-height: 40px;
}

.save {
  color: #333;
}

.system-nav {
  display: flex;
  align-items: center;
  gap: 317px;
  height: 108px;
  padding: 4px 0 0 434px;
  background-color: #f1f1f1;
}

.nav-back {
  margin-left: 5px;
}
```
